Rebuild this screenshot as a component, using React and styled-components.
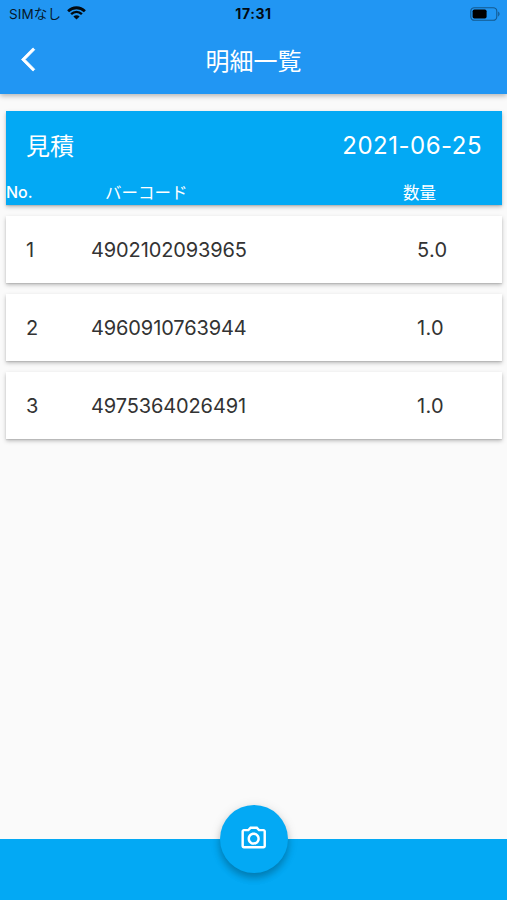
import React from "react";
import styled, { createGlobalStyle } from "styled-components";

const GlobalStyle = createGlobalStyle`
  * { box-sizing: border-box; }
  body {
    margin: 0;
    background: #fafafa;
    font-family: Inter, "Noto Sans CJK JP", sans-serif;
  }
`;

const Screen = styled.div`
  width: 507px;
  height: 900px;
  display: flex;
  flex-direction: column;
  background: #fafafa;
  overflow: hidden;
`;

const Header = styled.header`
  height: 94px;
  flex: none;
  background: #2196f3;
  box-shadow: 0 2px 5px rgba(0, 0, 0, 0.28);
`;

const StatusBar = styled.div`
  height: 27px;
  padding: 0 7px 0 9px;
  display: grid;
  grid-template-columns: 1fr auto 1fr;
  align-items: center;
  color: #06192b;
`;

const Carrier = styled.div`
  height: 27px;
  display: flex;
  align-items: center;
  gap: 6px;
  font-size: 13.5px;
  white-space: nowrap;
`;

const CarrierName = styled.span`
  line-height: 27px;
  padding-top: 1px;
  letter-spacing: 0.1px;
`;

const Clock = styled.div`
  font-size: 14px;
  font-weight: 700;
  line-height: 27px;
  letter-spacing: 0.6px;
  margin-right: 2px;
  padding-bottom: 1px;
  color: #020a12;
`;

const BatterySlot = styled.div`
  display: flex;
  justify-content: flex-end;
  padding-bottom: 1px;
`;

const TitleBar = styled.div`
  height: 67px;
  display: grid;
  grid-template-columns: 60px 1fr 60px;
  align-items: center;
`;

const BackButton = styled.button`
  border: 0;
  background: none;
  padding: 0 0 0 21px;
  height: 29px;
  margin-bottom: 2px;
  display: flex;
`;

const Title = styled.h1`
  margin: 2px 0 0;
  text-align: center;
  color: #fff;
  font-size: 24px;
  font-weight: 400;
  line-height: 36px;
`;

const Content = styled.main`
  flex: 1;
  padding: 17px 5px 0 6px;
  display: flex;
  flex-direction: column;
  gap: 11px;
`;

const Card = styled.section`
  background: ${(p) => (p.$accent ? "#03a9f4" : "#fff")};
  color: ${(p) => (p.$accent ? "#fff" : "#333")};
  height: ${(p) => (p.$accent ? 94 : 67)}px;
  box-shadow: 0 2px 4px rgba(0, 0, 0, 0.25), 0 1px 1px rgba(0, 0, 0, 0.08);
`;

const Summary = styled.div`
  height: 70px;
  padding: 0 20px;
  display: flex;
  align-items: center;
  justify-content: space-between;
  font-size: 24px;
  line-height: 36px;
`;

const DocumentType = styled.span`
  padding-top: 2px;
`;

const DateText = styled.time`
  font-size: 24px;
  letter-spacing: 0.5px;
`;

const ColumnHeads = styled.div`
  height: 24px;
  display: grid;
  grid-template-columns: 99px 298px 1fr;
  align-items: center;
  font-size: 16.5px;
  line-height: 22px;
`;

const NumberHead = styled.span`
  font-size: 16px;
  font-weight: 500;
  padding-bottom: 2px;
`;

const ItemRow = styled(Card)`
  display: grid;
  grid-template-columns: 65px 326px 1fr;
  align-items: center;
  padding-left: 20px;
  font-size: 20px;
`;

const Cell = styled.span`
  letter-spacing: ${(p) => p.$tracking || 0}px;
`;

const BottomBar = styled.footer`
  height: 61px;
  flex: none;
  background: #03a9f4;
  display: flex;
  justify-content: center;
`;

const CameraButton = styled.button`
  width: 68.5px;
  height: 68.5px;
  margin: -34.3px 0 0 0.5px;
  padding: 0 0 1px;
  border: 0;
  border-radius: 50%;
  background: #03a9f4;
  display: flex;
  align-items: center;
  justify-content: center;
  box-shadow: 0 5px 7px rgba(0, 0, 0, 0.2), 0 2px 12px rgba(0, 0, 0, 0.12);
`;

const items = [
  { no: "1", code: "4902102093965", qty: "5.0" },
  { no: "2", code: "4960910763944", qty: "1.0" },
  { no: "3", code: "4975364026491", qty: "1.0" },
];

const WifiIcon = () => (
  <svg width="19" height="16" viewBox="0 0 19 16" fill="none">
    <path d="M1.1 5.2C6 .6 13 .6 17.9 5.2" stroke="#020a12" strokeWidth="2.8" />
    <path d="M4.1 8.2C7.3 5.2 11.7 5.2 14.9 8.2" stroke="#020a12" strokeWidth="2.4" />
    <path d="M9.5 13.4 6.4 10.4C8.2 8.8 10.8 8.8 12.6 10.4Z" fill="#020a12" />
  </svg>
);

const BatteryIcon = () => (
  <svg width="30" height="14" viewBox="0 0 30 14" fill="none">
    <rect x="0.8" y="0.7" width="26" height="12.6" rx="3.6" stroke="#13598f" strokeWidth="1.1" />
    <rect x="2.6" y="2.5" width="14" height="9" rx="1.8" fill="#000" />
    <path d="M28.2 4.6c1.8.7 1.8 4.1 0 4.8Z" fill="#13598f" />
  </svg>
);

const BackIcon = () => (
  <svg width="29" height="29" viewBox="0 0 24 24" fill="#fff">
    <path
      d="M11.4 3.87 9.9 2.4 0.4 12l9.5 9.6 1.5-1.47L3.4 12z"
      stroke="#fff"
      strokeWidth="0.7"
    />
  </svg>
);

const CameraIcon = () => (
  <svg width="29.4" height="29.4" viewBox="0 0 24 24" fill="#fff">
    <path d="M14.12 4l1.83 2H20v12H4V6h4.05l1.83-2h4.24M15 2H9L7.17 4H4c-1.1 0-2 .9-2 2v12c0 1.1.9 2 2 2h16c1.1 0 2-.9 2-2V6c0-1.1-.9-2-2-2h-3.17L15 2zm-3 7c1.65 0 3 1.35 3 3s-1.35 3-3 3-3-1.35-3-3 1.35-3 3-3m0-2c-2.76 0-5 2.24-5 5s2.24 5 5 5 5-2.24 5-5-2.24-5-5-5z" />
  </svg>
);

export default function App() {
  return (
    <Screen>
      <GlobalStyle />
      <Header>
        <StatusBar>
          <Carrier>
            <CarrierName>SIMなし</CarrierName>
            <WifiIcon />
          </Carrier>
          <Clock>17:31</Clock>
          <BatterySlot>
            <BatteryIcon />
          </BatterySlot>
        </StatusBar>
        <TitleBar>
          <BackButton aria-label="戻る">
            <BackIcon />
          </BackButton>
          <Title>明細一覧</Title>
        </TitleBar>
      </Header>
      <Content>
        <Card $accent>
          <Summary>
            <DocumentType>見積</DocumentType>
            <DateText>2021-06-25</DateText>
          </Summary>
          <ColumnHeads>
            <NumberHead>No.</NumberHead>
            <span>バーコード</span>
            <span>数量</span>
          </ColumnHeads>
        </Card>
        {items.map((item) => (
          <ItemRow key={item.no}>
            <Cell>{item.no}</Cell>
            <Cell $tracking={-0.12}>{item.code}</Cell>
            <Cell $tracking={0.3}>{item.qty}</Cell>
          </ItemRow>
        ))}
      </Content>
      <BottomBar>
        <CameraButton aria-label="カメラ">
          <CameraIcon />
        </CameraButton>
      </BottomBar>
    </Screen>
  );
}
